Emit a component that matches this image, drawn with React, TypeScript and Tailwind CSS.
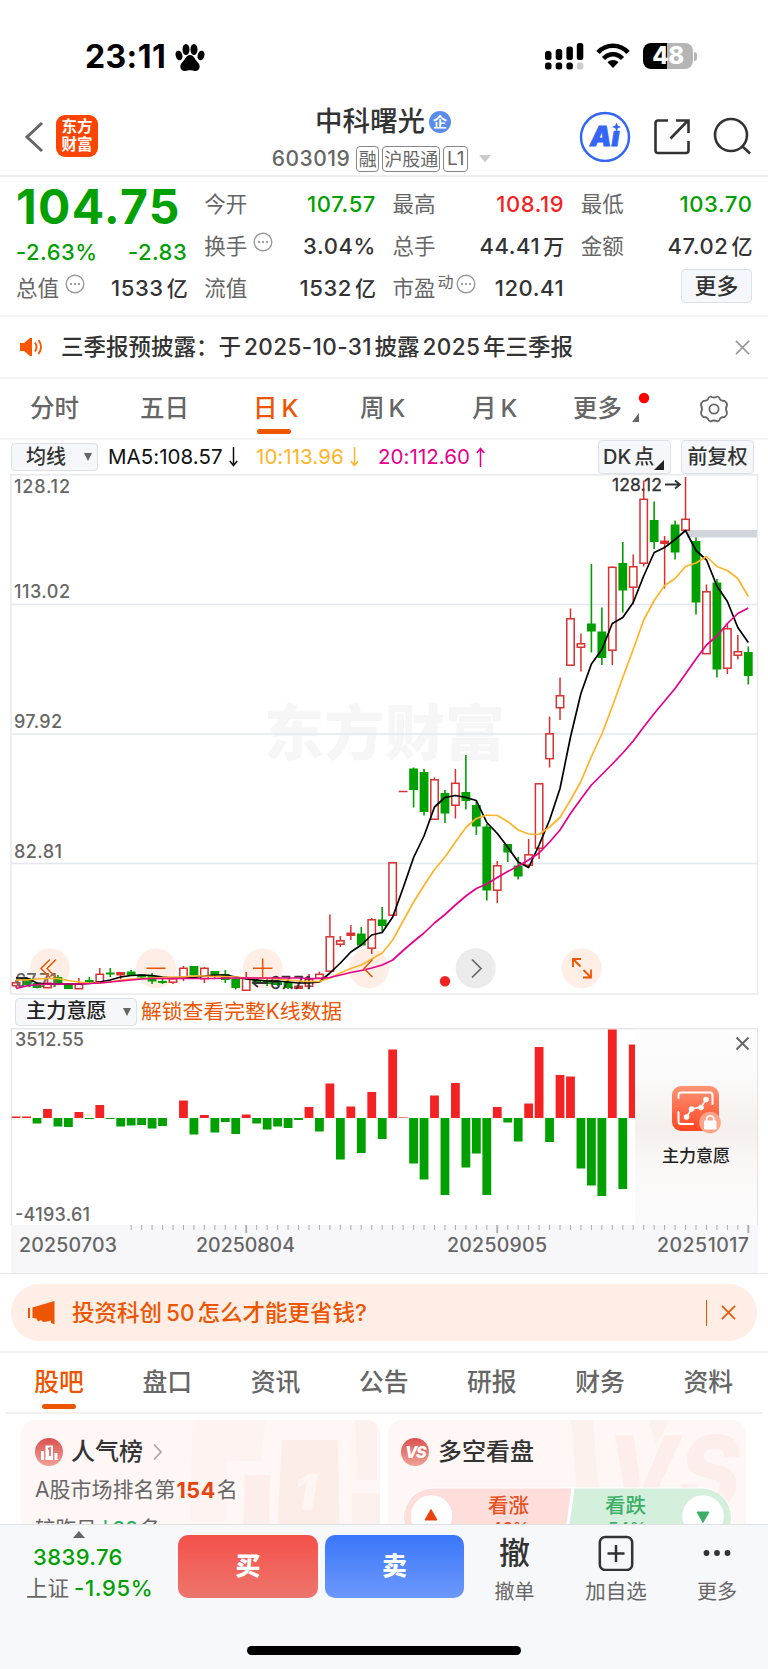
import React from 'react';

type Candle = [number, number, number, number, 'r' | 'g'];

// body top, body bottom, high, low
const candles: Candle[] = [
  [982.5, 986, 980, 988, 'r'], [978, 985, 977, 986, 'g'], [983, 988, 982, 988.5, 'g'], [983, 988, 978, 988, 'r'],
  [977, 984, 975, 984, 'g'], [984, 989, 983, 989, 'g'], [984, 989, 978, 989, 'r'], [980, 982, 977, 983, 'g'],
  [974, 982, 968, 982, 'r'], [972.5, 974.5, 968, 977, 'g'], [972.5, 975, 972, 979, 'r'], [971.5, 975.5, 970, 976, 'g'],
  [974.5, 977.5, 974, 978, 'g'], [975.5, 981.5, 973, 984, 'g'], [981, 983, 979, 984, 'g'], [978.5, 982.5, 978, 984, 'r'],
  [968, 977.5, 966, 981, 'r'], [966, 975.5, 966, 976, 'g'], [968, 979, 967, 983, 'r'], [971, 975, 971, 979, 'g'],
  [974, 980, 970, 983, 'g'], [978.5, 988, 978, 989.5, 'g'], [978, 990.5, 972, 990.5, 'r'], [980, 983, 979, 984, 'g'],
  [980, 984, 979, 986, 'g'], [982, 985, 980, 986, 'g'], [982, 988, 980, 989, 'g'], [986, 988.5, 985, 989, 'r'],
  [979, 986.5, 974, 989, 'r'], [974, 978.5, 971.5, 979, 'r'], [936.5, 971.5, 914.5, 971.5, 'r'], [940.5, 944.5, 936, 947, 'r'],
  [933, 935.5, 925, 940, 'r'], [933.5, 945.5, 927, 946, 'g'], [919.5, 948.5, 918, 954, 'r'], [919.5, 926, 907, 932, 'g'],
  [862.5, 915.5, 862, 916, 'r'], [791.5, 792.5, 791.5, 792.5, 'r'], [768.5, 790, 767.5, 807.5, 'g'], [772, 812, 769, 815.5, 'g'],
  [779.5, 819.5, 777.5, 820, 'r'], [793, 813.5, 790, 823, 'g'], [783, 805.5, 769, 818.5, 'r'], [792, 801, 755, 809.5, 'g'],
  [805, 826.5, 801, 835, 'g'], [826.5, 890.5, 824, 900.5, 'g'], [865.5, 890.5, 861, 903, 'r'], [844, 852.5, 844, 862, 'g'],
  [865.5, 876.5, 857, 879.5, 'g'], [854.5, 865.5, 839, 867.5, 'r'], [783.5, 848.5, 783, 859, 'r'], [733.5, 759, 716.5, 767.5, 'r'],
  [695.5, 708, 677.5, 720, 'r'], [618.5, 665.5, 608.5, 666, 'r'], [643.5, 647.5, 633.5, 671.5, 'r'], [623.5, 631.5, 564, 652.5, 'g'],
  [631.5, 658, 607.5, 665, 'g'], [567, 650.5, 566.5, 665, 'r'], [563, 590.5, 542, 612.5, 'g'], [566.5, 587.5, 554.5, 604.5, 'r'],
  [499, 563.5, 480.5, 566.5, 'r'], [520, 542, 501.5, 549, 'g'], [541, 543.5, 536, 588.5, 'r'], [524.5, 552.5, 520.5, 559.5, 'g'],
  [519, 530.5, 477, 531, 'r'], [541, 602.5, 537.5, 614.5, 'g'], [591.5, 654, 584.5, 654, 'r'], [582.5, 669.5, 579, 677.5, 'g'],
  [628.5, 668.5, 623.5, 674, 'r'], [651.5, 655.5, 635, 659.5, 'r'], [652, 676, 646.5, 684.5, 'g'],
];

const ma5 = [
  978, 978, 983, 984, 984, 984, 984, 983.5, 982, 980, 977, 975.5, 975, 975.5, 977, 978, 978, 977.5, 976, 975, 975, 977, 979, 980,
  981, 981, 982, 983, 983, 982, 973, 963, 952, 945, 935, 932.5, 917, 888, 857.5, 836, 807, 797.5, 795.5, 797.5, 800.5, 822.5,
  833.5, 847, 862, 867.5, 845, 820, 788.5, 737, 693.5, 664, 649.5, 623.5, 617.5, 602.5, 576, 552.5, 547.5, 539.5, 530.5, 550.5,
  560, 586, 601.5, 627.5, 642.5,
];
const ma10 = [
  980, 980, 979, 978.5, 978.5, 980.5, 982, 983, 983, 982, 980, 979, 978.5, 978, 977.5, 977, 977, 976, 976, 976.5, 976.5, 977, 978,
  978, 978.5, 979, 980, 981, 981.5, 981.5, 978, 973, 968.5, 965, 959, 953, 940, 921, 902, 885.5, 869.5, 857, 842, 827.5, 818.5,
  815, 815.5, 821.5, 830, 834, 834.5, 827, 817.5, 800, 781.5, 756.5, 734, 706.5, 677.5, 649.5, 620, 600.5, 585.5, 578.5, 566.5,
  563, 556.5, 566.5, 570.5, 578.5, 596.5,
];
const ma20 = [
  988.5, 986, 984.5, 984, 984, 984, 984, 983.5, 983, 982, 981, 980, 979, 978.5, 978.5, 978.5, 978.5, 978.5, 978.5, 978.5, 978, 978,
  978, 978, 978, 978, 978, 978, 978.5, 978.5, 977.5, 975, 972.5, 970.5, 968, 965, 960, 950.5, 941.5, 933, 923, 914.5, 905, 896,
  888.5, 884, 877.5, 871.5, 866, 860, 853, 842, 830, 813.5, 799, 785, 774.5, 764, 753, 741, 727, 713.5, 701, 688.5, 674, 659, 645,
  636, 623.5, 613.5, 608,
];

// positive goes up (red), negative goes down (green)
const flow = [
  1.5, 1.5, -5.5, 9, -8.5, -9, 6, -1, 13, -1, -8.5, -7.5, -7, -10.5, -8, 0, 17.5, -16.5, 3, -14.5, -4, -16, 3.5, -5.5, -11.5, -8.5,
  -10, -2, 11, -13.5, 34.5, -41.5, 11.5, -35, 26, -21, 68.5, 0.6, -45.5, -61.5, 22.5, -77, 35, -49.5, -35.5, -77, 11, -4.5, -23.5,
  14.5, 71, -24, 43, 41.5, -50.5, -67.5, -78, 88.5, -71, 73.5,
];

const cx = (i: number) => 16.1 + 10.46 * i;
const toPoints = (arr: number[]) => arr.map((y, i) => `${cx(i).toFixed(1)},${y}`).join(' ');

function MoreDots() {
  return (
    <svg className="mb-2 ml-1.5 h-5 w-5" viewBox="0 0 20 20">
      <circle cx="10" cy="10" r="8.8" fill="none" stroke="#999" strokeWidth="1.4" />
      <circle cx="6" cy="10" r="1.1" fill="#888" />
      <circle cx="10" cy="10" r="1.1" fill="#888" />
      <circle cx="14" cy="10" r="1.1" fill="#888" />
    </svg>
  );
}

function Cross({ className }: { className: string }) {
  return (
    <svg className={className} viewBox="0 0 16 16" fill="none" stroke="currentColor" strokeWidth="1.7">
      <path d="M1 1L15 15M15 1L1 15" />
    </svg>
  );
}

function StatusBar() {
  return (
    <div className="flex h-[98px] shrink-0 items-start pl-[85px] pr-[71px] pt-[38px]">
      <span className="w-[90px] whitespace-nowrap text-[32px] font-bold leading-[38px] tracking-[0.4px] text-black">23:11</span>
      <svg className="mt-[4px] h-[30px] w-[30px]" viewBox="0 0 30 30">
        <ellipse cx="11" cy="7.5" rx="3.5" ry="5.5" />
        <ellipse cx="19" cy="7.5" rx="3.5" ry="5.5" />
        <ellipse cx="4" cy="13.5" rx="3.3" ry="4.8" transform="rotate(-15 4 13.5)" />
        <ellipse cx="26" cy="13.5" rx="3.3" ry="4.8" transform="rotate(15 26 13.5)" />
        <path d="M15 13c4 0 4.500 4 7.500 7 4 4 2 9-2.500 9-2 0-3-.7-5-.7s-3 .7-5 .7c-4.500 0-6.500-5-2.500-9 3-3 3.500-7 7.500-7z" />
      </svg>
      <div className="ml-auto flex items-start pt-[5px]">
        <svg className="h-[27px] w-[39px]" viewBox="0 0 39 27">
          <rect x="0" y="8" width="6.500" height="9" rx="2.500" />
          <rect x="10.700" y="6" width="6.500" height="11" rx="2.500" />
          <rect x="21.400" y="3.500" width="6.500" height="13.500" rx="2.500" />
          <rect x="31.800" y="0" width="6.500" height="17" rx="2.500" />
          <rect x="0" y="19.500" width="6.500" height="7" rx="2.500" />
          <rect x="10.700" y="19.500" width="6.500" height="7" rx="2.500" />
          <rect x="21.400" y="19.500" width="6.500" height="7" rx="2.500" />
          <rect x="31.800" y="19.500" width="6.500" height="7" rx="2.500" fill="#ccc" />
        </svg>
        <svg className="ml-[12px] h-[25px] w-[34px]" viewBox="0 0 34 25">
          <path d="M2 9.500C10 0.500 24 0.500 32 9.500" fill="none" stroke="#000" strokeWidth="4.600" />
          <path d="M7.500 15.500C13 9.800 21 9.800 26.500 15.500" fill="none" stroke="#000" strokeWidth="4.400" />
          <path d="M17 25l-5.500-5.700c3-3 8-3 11 0z" />
        </svg>
        <div className="ml-[13px] flex h-[26px] w-[50px] items-center justify-center rounded-[8px] bg-[linear-gradient(90deg,#000_48%,#b5b5b5_48%)] text-[24px] font-extrabold leading-none tracking-[-0.5px] text-white">
          48
        </div>
        <div className="ml-[1px] mt-[9px] h-[9px] w-[3px] rounded-r-full bg-[#b5b5b5]" />
      </div>
    </div>
  );
}

function TitleBar() {
  return (
    <div className="grid h-[79px] shrink-0 grid-cols-[250px_1fr_250px] border-b-2 border-[#efefef] text-[#333]">
      <div className="flex items-start pl-[24px] pt-[17px]">
        <svg className="mt-[6px] h-[32px] w-[20px]" viewBox="0 0 20 32" fill="none" stroke="#666" strokeWidth="3">
          <path d="M18 2L3 16L18 30" />
        </svg>
        <div className="ml-[12px] grid h-[42px] w-[42px] place-content-center rounded-[9px] bg-[#ff4400] text-center text-[15.5px] font-bold leading-[18px] text-white">
          <span>东方</span>
          <span>财富</span>
        </div>
      </div>
      <div className="flex flex-col items-center">
        <div className="flex h-[48px] items-center pr-[2px]">
          <span className="text-[27.500px] font-medium leading-none">中科曙光</span>
          <span className="ml-[4px] grid h-[22px] w-[22px] place-items-center rounded-full bg-[#5b8de8] text-[14px] font-bold leading-none text-white">企</span>
        </div>
        <div className="flex h-[26px] items-center pr-[5px] text-[#666]">
          <span className="mr-[6px] text-[21px] font-medium tracking-[0.500px]">603019</span>
          <span className="mr-[3px] flex h-[26px] w-[23px] items-center justify-center rounded-[4px] border border-[#888] text-[18px]">融</span>
          <span className="mr-[3px] flex h-[26px] w-[58px] items-center justify-center rounded-[4px] border border-[#888] text-[18px]">沪股通</span>
          <span className="flex h-[26px] w-[25px] items-center justify-center rounded-[4px] border border-[#888] text-[19px]">L1</span>
          <svg className="ml-[11px] h-[8px] w-[12px]" viewBox="0 0 12 8"><path d="M0 0h12L6 7.500z" fill="#ccc" /></svg>
        </div>
      </div>
      <div className="flex items-start justify-end pr-[17px] pt-[12px]">
        <svg className="h-[52px] w-[52px]" viewBox="0 0 52 52">
          <circle cx="26" cy="27" r="24" fill="none" stroke="#3466f6" strokeWidth="2.500" />
          <text x="11" y="36" fontSize="27" fontWeight="900" fontStyle="italic" fill="#3466f6" stroke="#3466f6" strokeWidth="0.800">Ai</text>
          <rect x="31.500" y="11" width="11" height="9.500" fill="#fff" />
          <path d="M37.500 12.500l1.300 3 3.200 1.400-3.200 1.400-1.300 3.200-1.300-3.200-3.200-1.400 3.200-1.400z" fill="#3466f6" />
        </svg>
        <svg className="ml-[23px] mt-[8px] h-[38px] w-[36px]" viewBox="0 0 36 38" fill="none" stroke="#333" strokeWidth="2.600">
          <path d="M14 2.500H4a2.500 2.500 0 0 0-2.500 2.500V32.500a2.500 2.500 0 0 0 2.500 2.500H32a2.500 2.500 0 0 0 2.500-2.500V23" />
          <path d="M16.500 20.500L34 2.500M22 2.500H34.500V15" />
        </svg>
        <svg className="ml-[23px] mt-[7px] h-[38px] w-[38px]" viewBox="0 0 38 38" fill="none" stroke="#333" strokeWidth="2.600">
          <circle cx="18" cy="18" r="16" />
          <path d="M29 29L37 36.500" />
        </svg>
      </div>
    </div>
  );
}

interface StatProps {
  label: string;
  value: string;
  unit?: string;
  tone?: string;
  info?: boolean;
  sup?: string;
}

function Stat({ label, value, unit, tone = 'text-[#333]', info, sup }: StatProps) {
  return (
    <div className="flex h-[42px] items-center">
      <span className="text-[21.500px] text-[#666]">{label}</span>
      {sup && <span className="mb-3 ml-0.5 text-[16px] text-[#666]">{sup}</span>}
      {sup ? <span className="-ml-1"><MoreDots /></span> : info && <MoreDots />}
      <span className={`-mr-[0.500px] ml-auto whitespace-nowrap text-[22px] font-medium tracking-[0.600px] ${tone}`}>
        {value}
        {unit && <span className="ml-[3px] text-[21px] tracking-normal">{unit}</span>}
      </span>
    </div>
  );
}

function Quote() {
  return (
    <div className="grid h-[140px] shrink-0 grid-cols-4 gap-x-[17px] border-b-2 border-[#f4f4f4] px-[16px] pt-[6px]">
      <div>
        <div className="flex h-[48px] items-center text-[48px] font-bold leading-none tracking-[1.300px] text-[#00a000]">104.75</div>
        <div className="mt-[6px] flex h-[30px] items-center justify-between text-[22px] font-medium tracking-[0.500px] text-[#00a000]">
          <span>-2.63%</span>
          <span>-2.83</span>
        </div>
        <Stat label="总值" value="1533" unit="亿" info />
      </div>
      <div>
        <Stat label="今开" value="107.57" tone="text-[#00a000]" />
        <Stat label="换手" value="3.04%" info />
        <Stat label="流值" value="1532" unit="亿" />
      </div>
      <div>
        <Stat label="最高" value="108.19" tone="text-[#f42323]" />
        <Stat label="总手" value="44.41" unit="万" />
        <Stat label="市盈" value="120.41" sup="动" info />
      </div>
      <div>
        <Stat label="最低" value="103.70" tone="text-[#00a000]" />
        <Stat label="金额" value="47.02" unit="亿" />
        <button className="ml-auto mt-[2px] flex h-[34px] w-[71px] items-center justify-center rounded-[4px] border border-[#dde0e8] bg-[#f6f7fa] text-[22px] font-medium text-[#333]">
          更多
        </button>
      </div>
    </div>
  );
}

function Notice() {
  return (
    <div className="flex h-[62px] shrink-0 items-center border-b-2 border-[#f4f4f4] pl-[19px] pr-[18px]">
      <svg className="h-[20px] w-[24px]" viewBox="0 0 24 20">
        <path d="M1 6h4l6-5h2v18h-2l-6-5H1z" fill="#ff5500" />
        <path d="M16 5.500q3 4.500 0 9M19.500 3q5 7 0 14" fill="none" stroke="#ff5500" strokeWidth="1.900" />
      </svg>
      <span className="ml-[18px] whitespace-nowrap text-[22.500px] font-medium text-[#333]">
        三季报预披露：于<span className="ml-[3px] mr-[2.500px] tracking-[0.400px]">2025-10-31</span>披露
        <span className="ml-[3px] mr-[2.500px] tracking-[0.400px]">2025</span>年三季报
      </span>
      <Cross className="ml-auto h-[15px] w-[15px] text-[#999]" />
    </div>
  );
}

function PeriodTabs() {
  return (
    <div className="flex h-[61px] shrink-0 items-center border-b-2 border-[#f4f4f4] pl-[30px] text-[24.500px] text-[#666]">
      <span className="w-[110px] font-medium">分时</span>
      <span className="w-[113px] font-medium">五日</span>
      <span className="relative w-[107px] font-medium text-[#ee5500]">
        日<span className="ml-[4px]">K</span>
        <span className="absolute -bottom-[7px] left-[4px] h-[5px] w-[34px] rounded-full bg-[#ee5500]" />
      </span>
      <span className="w-[112px] font-medium">周<span className="ml-[4px]">K</span></span>
      <span className="w-[101px] font-medium">月<span className="ml-[4px]">K</span></span>
      <span className="relative w-[126px] font-medium">
        更多
        <svg className="absolute left-[58px] top-[2px] h-[34px] w-[20px]" viewBox="0 0 20 34">
          <circle cx="13" cy="6" r="5.200" fill="#f00" />
          <path d="M8 21v9H1z" fill="#666" />
        </svg>
      </span>
      <svg className="h-[30px] w-[30px]" viewBox="0 0 30 30" fill="none" stroke="#666" strokeWidth="1.800" strokeLinejoin="round">
        <path d="M11.500 2.500Q15 4.500 18.500 2.500Q20.500 3 21.300 5.800Q23 7 25.600 7Q28.300 9 28 11Q26 15 28 19Q28.300 21 25.600 23Q23 23 21.300 24.200Q20.500 27 18.500 27.500Q15 25.500 11.500 27.500Q9.500 27 8.700 24.200Q7 23 4.400 23Q1.700 21 2 19Q4 15 2 11Q1.700 9 4.400 7Q7 7 8.700 5.800Q9.500 3 11.500 2.500z" />
        <circle cx="15" cy="15" r="4.600" />
      </svg>
    </div>
  );
}

function Arrow({ up }: { up?: boolean }) {
  return (
    <svg className="ml-[6px] h-[20px] w-[9px]" viewBox="0 0 9 20" fill="none" stroke="currentColor" strokeWidth="1.500">
      <path d={up ? 'M4.500 20V2M0.800 6L4.500 1.500L8.200 6' : 'M4.500 0V18M0.800 14L4.500 18.500L8.200 14'} />
    </svg>
  );
}

function MaRow() {
  return (
    <div className="flex h-[34px] shrink-0 items-center pl-[11px] pr-[14px] text-[20px] text-[#333]">
      <button className="flex h-[28px] w-[87px] items-center justify-between rounded-[4px] border border-[#dde0e8] bg-[#f6f7fa] pl-[14px] pr-[5px] font-medium">
        均线
        <svg className="h-[8px] w-[8px]" viewBox="0 0 8 8"><path d="M0 0h8L4 8z" fill="#666" /></svg>
      </button>
      <span className="ml-[10px] flex w-[148px] items-center text-[20.500px] tracking-[0.050px] text-[#111]">MA5:108.57<Arrow /></span>
      <span className="flex w-[122px] items-center text-[20.500px] tracking-[0.050px] text-[#ffb429]">10:113.96<Arrow /></span>
      <span className="flex items-center text-[20.500px] tracking-[0.050px] text-[#e6008c]">20:112.60<Arrow up /></span>
      <button className="ml-auto flex h-[34px] w-[73px] items-center rounded-[4px] border border-[#dde0e8] bg-[#f6f7fa] pl-[4px] font-medium">
        DK<span className="ml-[3px]">点</span>
        <svg className="mt-[16px] h-[10px] w-[10px]" viewBox="0 0 10 10"><path d="M10 0v10H0z" fill="#222" /></svg>
      </button>
      <button className="ml-[10px] flex h-[34px] w-[73px] items-center justify-center rounded-[4px] border border-[#dde0e8] bg-[#f6f7fa] font-medium">前复权</button>
    </div>
  );
}

function KChart() {
  return (
    <svg className="block h-[521px] w-[768px] shrink-0" viewBox="0 474 768 521">
      <text x="264" y="755" fontSize="60" fontWeight="900" fill="#f6f6f6" textLength="241">东方财富</text>
      {[604.5, 734, 863.5].map((y) => (
        <line key={y} x1="11" x2="757" y1={y} y2={y} stroke="#e3e8f0" strokeWidth="1.300" />
      ))}
      <rect x="11" y="474.800" width="746.500" height="519.200" fill="none" stroke="#e8e9ec" strokeWidth="1.500" />
      <rect x="687" y="530" width="70" height="7.500" fill="#d2d6db" />
      {[50, 156, 262.7, 369, 581.7].map((x) => (
        <circle key={x} cx={x} cy="968.300" r="20" fill="#feeee6" />
      ))}
      <circle cx="475.700" cy="968.300" r="20" fill="#ebebeb" />
      {candles.map(([top, bot, hi, lo, c], i) => {
        const x = cx(i);
        if (c === 'g') {
          return (
            <g key={i} fill="#00a000">
              <rect x={x - 4.4} y={top} width="8.800" height={bot - top} />
              <rect x={x - 0.8} y={hi} width="1.600" height={lo - hi} />
            </g>
          );
        }
        return (
          <g key={i} stroke="#d93030" strokeWidth="1.500" fill="none">
            {bot - top > 1.2 && <rect x={x - 3.7} y={top + 0.3} width="7.400" height={bot - top - 0.6} fill={bot - top < 3 ? '#d93030' : 'none'} />}
            {bot - top <= 1.2 && <path d={`M${x - 4.4} ${top}h8.800`} />}
            {top > hi && <path d={`M${x} ${hi}V${top}`} />}
            {lo > bot && <path d={`M${x} ${bot}V${lo}`} />}
          </g>
        );
      })}
      <g fontSize="18" fill="#666" fontWeight="500">
        <text x="14" y="492.500" textLength="56">128.12</text>
        <text x="14" y="598" textLength="56">113.02</text>
        <text x="14" y="728" textLength="48">97.92</text>
        <text x="14" y="858" textLength="48">82.81</text>
        <text x="15" y="987" textLength="42">67.71</text>
      </g>
      <g fill="#333" stroke="#333">
        <text x="612" y="491" fontSize="17.500" textLength="50" strokeWidth="0.300">128.12</text>
        <path d="M665 484.500h14M675 480.500l5 4-5 4" fill="none" strokeWidth="1.800" />
        <text x="270" y="989" fontSize="17.500" textLength="41" strokeWidth="0.300">67.71</text>
        <path d="M268 983h-14M258 979l-5 4 5 4" fill="none" strokeWidth="1.800" />
      </g>
      <g fill="none" strokeWidth="1.700" strokeLinejoin="round">
        <polyline points={toPoints(ma5)} stroke="#000" />
        <polyline points={toPoints(ma10)} stroke="#ffb429" />
        <polyline points={toPoints(ma20)} stroke="#e6008c" />
      </g>
      <circle cx="445" cy="981.300" r="5.200" fill="#f42323" />
      <g fill="none" stroke="#ee5500" strokeWidth="1.500">
        <path d="M50 959.500L41 968.500L50 977.500M56 959.500L47 968.500L56 977.500" />
        <path d="M146.500 968.300h19M253 968.300h19.500M262.700 958.500v19.500" />
        <path d="M372.500 959.500L364 968.500L372.500 977" />
        <path d="M581 959h-8v8M573 959l7.500 7.500M583 977.500h8v-8M591 977.500l-7.500-7.500" strokeWidth="1.800" />
      </g>
      <path d="M472 959.500L481 968.500L472 977.500" fill="none" stroke="#666" strokeWidth="1.700" />
    </svg>
  );
}

function FlowHeader() {
  return (
    <div className="flex h-[33px] shrink-0 items-center pl-[15px] text-[20.200px]">
      <button className="flex h-[28px] w-[122px] items-center justify-between rounded-[4px] border border-[#dde0e8] bg-[#f6f7fa] pl-[10px] pr-[5px] font-medium text-[#222]">
        主力意愿
        <svg className="h-[8px] w-[8px]" viewBox="0 0 8 8"><path d="M0 0h8L4 8z" fill="#666" /></svg>
      </button>
      <span className="ml-[4px] text-[20.800px] text-[#ee5500]">解锁查看完整K线数据</span>
    </div>
  );
}

function FlowChart() {
  return (
    <svg className="block h-[245px] w-[768px] shrink-0" viewBox="0 1028 768 245">
      <defs>
        <linearGradient id="lockBg" x1="0" y1="0" x2="0" y2="1">
          <stop offset="0" stopColor="#fdfdfd" />
          <stop offset="0.25" stopColor="#fbfafa" />
          <stop offset="0.5" stopColor="#f5f0ed" />
          <stop offset="0.75" stopColor="#fbf9f8" />
          <stop offset="1" stopColor="#fbfbfc" />
        </linearGradient>
        <linearGradient id="lockIcon" x1="0" y1="0" x2="0" y2="1">
          <stop offset="0" stopColor="#ff9475" />
          <stop offset="1" stopColor="#ff4522" />
        </linearGradient>
      </defs>
      <rect x="11" y="1225" width="747" height="48" fill="#f7f7fa" />
      <path d="M11.500 1225V1028.700H757.500V1225" fill="none" stroke="#e4e5e8" strokeWidth="1.400" />
      {flow.map((v, i) => {
        const x = cx(i) - 4.4;
        return (
          <rect key={i} x={x} y={v > 0 ? 1118 - v : 1118} width={Math.min(8.8, 635 - x)} height={Math.abs(v)} fill={v > 0 ? '#f42323' : '#00a000'} />
        );
      })}
      {candles.map((_, i) =>
        i < 11 ? null : (
          <line
            key={i}
            x1={cx(i)}
            x2={cx(i)}
            y1="1225"
            y2={i === 22 || i === 46 || i === 70 ? 1233 : 1230}
            stroke="#aaa"
            strokeWidth={i === 22 || i === 46 || i === 70 ? 1.8 : 1}
          />
        )
      )}
      <rect x="635" y="1029.500" width="122" height="195.500" fill="url(#lockBg)" />
      <g fontSize="18" fill="#666" fontWeight="500">
        <text x="15" y="1045.500" textLength="69">3512.55</text>
        <text x="15" y="1221" textLength="75">-4193.61</text>
      </g>
      <g fontSize="19.500" fill="#666" fontWeight="500">
        <text x="19" y="1252" textLength="98">20250703</text>
        <text x="196" y="1252" textLength="99">20250804</text>
        <text x="447" y="1252" textLength="100">20250905</text>
        <text x="657" y="1252" textLength="92">20251017</text>
      </g>
      <path d="M736.500 1037.500l12 12M748.500 1037.500l-12 12" stroke="#666" strokeWidth="1.900" />
      <rect x="672" y="1086" width="47" height="45" rx="9" fill="url(#lockIcon)" />
      <g fill="none" stroke="#fff" strokeWidth="2">
        <path d="M678.500 1098v-3q0-2.500 2.500-2.500h29q2.500 0 2.500 2.500v9M678.500 1112v9.500q0 2.500 2.500 2.500h12" strokeLinecap="round" />
        <path d="M686.500 1117L691.500 1109L701 1107L706 1100" strokeWidth="1.600" />
      </g>
      <g fill="#fff">
        <circle cx="686.500" cy="1117" r="2.800" />
        <circle cx="691.500" cy="1109" r="2.800" />
        <circle cx="701" cy="1107.500" r="2.800" />
        <circle cx="706" cy="1099.500" r="2.800" />
      </g>
      <circle cx="710" cy="1122.500" r="10.800" fill="#ffa38a" />
      <rect x="704" y="1120.500" width="12.500" height="9" rx="1.200" fill="#fff" />
      <path d="M706.500 1121v-1.500a3.700 3.700 0 0 1 7.400 0v1.500" fill="none" stroke="#fff" strokeWidth="1.700" />
      <text x="662" y="1162" fontSize="17" fill="#222" fontWeight="500" textLength="68">主力意愿</text>
    </svg>
  );
}

function Promo() {
  return (
    <div className="h-[80px] shrink-0 border-b-2 border-t border-b-[#f1f1f1] border-t-[#e6e6e6] px-[11px] pt-[10px]">
      <div className="flex h-[57px] items-center rounded-full bg-[#feeee6] pl-[16px] pr-[21px] text-[#ee5500]">
        <svg className="h-[24px] w-[28px]" viewBox="0 0 28 24" fill="#ee5500">
          <rect x="1" y="7" width="2" height="10" />
          <path d="M5.500 6.500L27.500 0V23.500L24 22V19.500L20 20.500L16 21L14 19L11 20.500L9.500 17.500L5.500 17z" />
        </svg>
        <span className="ml-[17px] text-[22.500px] font-medium">
          投资科创<span className="ml-[4px] mr-[3px]">50</span>怎么才能更省钱?
        </span>
        <span className="ml-auto h-[26px] w-[1.500px] bg-[#ee5500]" />
        <Cross className="ml-[14px] h-[15px] w-[15px]" />
      </div>
    </div>
  );
}

function InfoTabs() {
  const tabs = ['股吧', '盘口', '资讯', '公告', '研报', '财务', '资料'];
  return (
    <div className="mx-[5px] flex h-[61px] shrink-0 border-b-2 border-[#f1f1f1] text-[24.800px] font-medium text-[#666]">
      {tabs.map((t, i) => (
        <div key={t} className={`relative flex w-[108.200px] items-center justify-center ${i === 0 ? 'text-[#ee5500]' : ''}`}>
          {t}
          {i === 0 && <span className="absolute bottom-[3px] left-[37px] h-[5.500px] w-[34px] rounded-full bg-[#ee5500]" />}
        </div>
      ))}
    </div>
  );
}

function Cards() {
  return (
    <div className="flex h-[110px] shrink-0 gap-[8px] overflow-hidden pl-[21px] pr-[22px] pt-[6px]">
      <div className="relative h-[150px] w-[359px] overflow-hidden rounded-[14px] bg-[#fef7f5] pl-[14px] pt-[16px]">
        <svg className="absolute right-0 top-0 h-[150px] w-[190px]" viewBox="190 1420 190 150" fill="#fcebe8">
          <path d="M193 1420h72l-4 41h-34v60h-37z" fillOpacity="0.350" />
          <path d="M282 1440h56l2 130h-65z" fillOpacity="0.900" />
          <path d="M245 1475h25l-2 100h-26z" fillOpacity="0.800" />
          <path d="M355 1420h22v60h-20zM352 1493h28v80h-28z" fillOpacity="0.500" />
          <text x="294" y="1510" fontSize="50" fontWeight="900" fontStyle="italic" fill="#fff5f3">1</text>
        </svg>
        <div className="relative flex h-[32px] items-center">
          <svg className="h-[28px] w-[28px]" viewBox="0 0 28 28">
            <defs>
              <linearGradient id="rank" x1="0" y1="0" x2="0" y2="1">
                <stop offset="0" stopColor="#d95050" />
                <stop offset="1" stopColor="#f0a096" />
              </linearGradient>
            </defs>
            <circle cx="14" cy="14" r="14" fill="url(#rank)" />
            <path d="M6 13h3v9H6zM10.500 7.500h7.500v14.500h-7.500zM19.500 15h3v7h-3z" fill="#fff" />
            <path d="M13 11l2-1v8" fill="none" stroke="#dc6a65" strokeWidth="1.700" />
          </svg>
          <span className="ml-[8px] text-[24px] font-medium text-[#333]">人气榜</span>
          <svg className="ml-[10px] h-[18px] w-[9px]" viewBox="0 0 9 18" fill="none" stroke="#aaa" strokeWidth="1.800"><path d="M1 1.500L8 9L1 16.500" /></svg>
        </div>
        <div className="relative mt-[6px] flex h-[32px] items-center text-[21px] text-[#666]">
          A股市场排名第<span className="ml-[1px] mr-[1px] text-[21.500px] font-bold tracking-[0.600px] text-[#e8420e]">154</span>名
        </div>
        <div className="relative mt-[7px] flex h-[32px] items-center text-[20.500px] text-[#666]">
          较昨日
          <svg className="ml-[3px] h-[18px] w-[11px]" viewBox="0 0 11 18" fill="none" stroke="#2eae5e" strokeWidth="2"><path d="M5.500 0V16M1.500 11.500L5.500 16L9.500 11.500" /></svg>
          <span className="mx-[2px] font-medium text-[#2eae5e]">22</span>名
        </div>
      </div>
      <div className="relative h-[150px] w-[358px] overflow-hidden rounded-[14px] bg-[#fef7f5] pl-[13px] pt-[16px]">
        <svg className="absolute right-0 top-0 h-[150px] w-[190px]" viewBox="556 1420 190 150" fill="#fcebe8">
          <path d="M571 1420h22l8 100h-22zM648 1420h22l-14 24z" fillOpacity="0.500" />
          <text x="606" y="1508" fontSize="100" fontWeight="800" fontStyle="italic" textLength="134" lengthAdjust="spacingAndGlyphs" fillOpacity="0.800">VS</text>
        </svg>
        <div className="relative flex h-[32px] items-center">
          <span className="flex h-[28px] w-[28px] items-center justify-center rounded-full bg-gradient-to-b from-[#d95050] to-[#f0a096] text-[16px] font-extrabold italic tracking-[-1.500px] text-white">VS</span>
          <span className="ml-[9px] text-[24px] font-medium text-[#333]">多空看盘</span>
        </div>
        <svg className="absolute left-[15px] top-[67px] h-[60px] w-[330px]" viewBox="403 1487 330 60">
          <path d="M433 1488H574L565 1547H433a29.500 29.500 0 0 1 0-59z" fill="#fddedb" stroke="#fff" strokeWidth="1" />
          <path d="M574 1488H702a29.500 29.500 0 0 1 0 59H565z" fill="#d5efdd" stroke="#fff" strokeWidth="1" />
          <path d="M573 1487L565 1547" stroke="#fff" strokeWidth="3" />
          <circle cx="431.500" cy="1516" r="20.800" fill="#fff" />
          <circle cx="703" cy="1516" r="20.800" fill="#fff" />
          <path d="M431 1509.500l6 10.500h-12z" fill="#e8420e" stroke="#e8420e" strokeLinejoin="round" />
          <path d="M703 1522.500l6-10.500h-12z" fill="#3cae68" stroke="#3cae68" strokeLinejoin="round" />
          <g fontSize="20.500" fontWeight="500">
            <text x="488" y="1512.500" fill="#e8501e">看涨</text>
            <text x="605" y="1512.500" fill="#3cae68">看跌</text>
          </g>
          <g fontSize="17" fontWeight="500">
            <text x="491" y="1535" fill="#e8501e">46%</text>
            <text x="608" y="1535" fill="#3cae68">54%</text>
          </g>
        </svg>
      </div>
    </div>
  );
}

function BottomBar() {
  return (
    <div className="flex h-[145px] shrink-0 flex-col border-t border-[#dedfe2] bg-[#f7f8fa]">
      <div className="flex h-[85px] pl-[26px]">
        <div className="w-[152px] pt-[6px]">
          <svg className="ml-[47px] h-[7px] w-[12px]" viewBox="0 0 12 7"><path d="M0 7h12L6 0z" fill="#666" /></svg>
          <div className="flex h-[39px] items-center pl-[7px] text-[22px] font-medium tracking-[0.400px] text-[#00a000]">3839.76</div>
          <div className="-mt-[4px] flex h-[31px] items-center text-[21.500px] text-[#666]">
            上证<span className="ml-[5px] text-[22px] font-medium tracking-[0.700px] text-[#00a000]">-1.95%</span>
          </div>
        </div>
        <button className="mt-[10px] h-[63px] w-[140px] rounded-[10px] bg-gradient-to-b from-[#f4504a] to-[#ec746c] text-[25px] font-black text-white">买</button>
        <button className="ml-[7px] mt-[10px] h-[63px] w-[139px] rounded-[10px] bg-gradient-to-b from-[#3a76fa] to-[#6c98fb] text-[25px] font-black text-white">卖</button>
        <div className="ml-[20px] flex w-[61px] flex-col items-center text-[20px] text-[#666]">
          <span className="mt-[9px] text-[31px] font-medium leading-[37px] text-[#333]">撤</span>
          <span className="mt-[7px] leading-[28px]">撤单</span>
        </div>
        <div className="ml-[30px] flex w-[82px] flex-col items-center text-[20.500px] text-[#666]">
          <svg className="mt-[10px] h-[36px] w-[36px]" viewBox="0 0 36 36" fill="none" stroke="#333" strokeWidth="2.500">
            <rect x="1.800" y="2" width="32.400" height="33" rx="5.500" />
            <path d="M9.500 18.500h17M18 10v17" />
          </svg>
          <span className="mt-[7px] leading-[28px]">加自选</span>
        </div>
        <div className="ml-[19px] flex w-[82px] flex-col items-center text-[20px] text-[#666]">
          <svg className="mt-[24px] h-[8px] w-[28px]" viewBox="0 0 28 8" fill="#333">
            <circle cx="3.500" cy="4" r="2.900" />
            <circle cx="14" cy="4" r="2.900" />
            <circle cx="24.500" cy="4" r="2.900" />
          </svg>
          <span className="mt-[21px] leading-[28px]">更多</span>
        </div>
      </div>
      <div className="mx-auto mt-[36px] h-[9px] w-[274px] rounded-full bg-black" />
    </div>
  );
}

export default function App() {
  return (
    <div className="flex h-[1669px] w-[768px] flex-col overflow-hidden bg-white font-['Inter','Noto_Sans_CJK_SC',sans-serif]">
      <StatusBar />
      <TitleBar />
      <Quote />
      <Notice />
      <PeriodTabs />
      <MaRow />
      <KChart />
      <FlowHeader />
      <FlowChart />
      <Promo />
      <InfoTabs />
      <Cards />
      <BottomBar />
    </div>
  );
}
